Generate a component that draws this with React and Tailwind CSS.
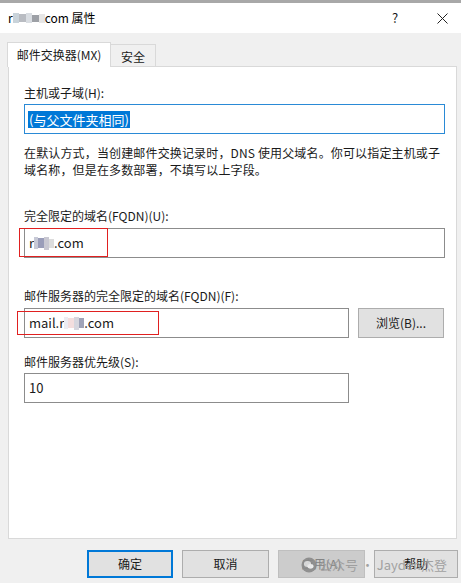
import React from "react";

const font = { fontFamily: '"Microsoft YaHei","Noto Sans CJK SC","Noto Sans",sans-serif' };

function Mosaic({ cells }) {
  return (
    <span className="inline-flex items-center align-middle">
      {cells.map((c, i) => (
        <span key={i} className="inline-block" style={{ width: c[0], height: c[1], background: c[2] }} />
      ))}
    </span>
  );
}

export default function App() {
  return (
    <div className="w-[461px] h-[583px] bg-[#f0f0f0] flex flex-col overflow-hidden relative text-[12px] text-[#1a1a1a]" style={font}>
      <div className="h-[3px] bg-[#a8a8a8] shrink-0" />
      <div className="h-[30px] bg-white flex items-center pl-[8px] shrink-0">
        <span className="flex items-center text-[12px] text-black">
          <span>r</span>
          <Mosaic cells={[[6, 10, "#c9d3da"], [7, 8, "#b9bcc2"], [6, 10, "#d9dde2"], [7, 7, "#9da0a6"], [6, 9, "#e6e6e6"]]} />
          <span>com 属性</span>
        </span>
        <div className="flex-1" />
        <span className="w-[10px] text-center text-[13px] mr-[37px]">?</span>
        <svg width="11" height="11" viewBox="0 0 11 11" className="mr-[13px]">
          <path d="M0.5 0.5 L10.5 10.5 M10.5 0.5 L0.5 10.5" stroke="#222" strokeWidth="1" />
        </svg>
      </div>

      <div className="pt-[9px] pl-[7px] pr-[4px] flex flex-col">
        <div className="flex items-end h-[24px]">
          <div className="h-[25px] w-[104px] bg-white border border-[#d9d9d9] border-b-0 flex items-center justify-center relative z-10 -mb-[1px]">
            <span className="pb-[1px]">邮件交换器(MX)</span>
          </div>
          <div className="h-[22px] w-[45px] bg-[#f0f0f0] border border-[#d9d9d9] border-l-0 border-b-0 flex items-center justify-center">
            <span className="pt-[2px]">安全</span>
          </div>
        </div>

        <div className="h-[473px] bg-white border border-[#d9d9d9] ml-[1px] pl-[15px] pr-[12px] pt-[17px] flex flex-col relative">
          <div className="h-[17px] leading-[17px]">主机或子域(H):</div>
          <div className="mt-[3px] h-[30px] w-[421px] border border-[#2a8ad6] flex items-center pl-[3px]">
            <span className="bg-[#0078d7] text-white text-[13px] leading-[17px] px-[1px]">(与父文件夹相同)</span>
          </div>
          <div className="mt-[10px] leading-[17px] w-[425px] tracking-[0.15px]">
            在默认方式，当创建邮件交换记录时，DNS 使用父域名。你可以指定主机或子域名称，但是在多数部署，不填写以上字段。
          </div>

          <div className="mt-[29px] h-[17px] leading-[17px]">完全限定的域名(FQDN)(U):</div>
          <div className="mt-[4px] h-[30px] w-[421px] border border-[#8c8c8c] flex items-center pl-[4px] text-[13px]">
            <span>r</span>
            <Mosaic cells={[[4, 12, "#c7c9d6"], [6, 10, "#9a9db9"], [5, 13, "#c9c8d2"], [5, 9, "#dcdcdc"]]} />
            <span>.com</span>
          </div>

          <div className="mt-[29px] h-[17px] leading-[17px]">邮件服务器的完全限定的域名(FQDN)(F):</div>
          <div className="mt-[4px] flex items-center">
            <div className="h-[30px] w-[325px] border border-[#8c8c8c] flex items-center pl-[4px] text-[13px]">
              <span>mail.r</span>
              <Mosaic cells={[[4, 12, "#ececf2"], [6, 10, "#f3dede"], [5, 13, "#d6d6de"], [5, 10, "#9fa3b8"]]} />
              <span>.com</span>
            </div>
            <div className="ml-[9px] h-[30px] w-[86px] bg-[#e1e1e1] border border-[#adadad] flex items-center justify-center">
              浏览(B)...
            </div>
          </div>

          <div className="mt-[15px] h-[17px] leading-[17px]">邮件服务器优先级(S):</div>
          <div className="mt-[3px] h-[30px] w-[325px] border border-[#8c8c8c] flex items-center pl-[4px] text-[13px]">
            10
          </div>

          <div className="absolute left-[10px] top-[161px] w-[89px] h-[29px] border border-[#e02020]" />
          <div className="absolute left-[8px] top-[244px] w-[142px] h-[24px] border border-[#e02020]" />
        </div>
      </div>

      <div className="mt-[11px] flex pl-[87px] gap-[9px]">
        <div className="h-[28px] w-[86px] bg-[#e1e1e1] border-2 border-[#0078d7] flex items-center justify-center">确定</div>
        <div className="h-[28px] w-[87px] bg-[#e1e1e1] border border-[#adadad] flex items-center justify-center">取消</div>
        <div className="h-[28px] w-[87px] bg-[#cccccc] border border-[#bfbfbf] flex items-center justify-center text-[#838383]">应用(A)</div>
        <div className="h-[28px] w-[84px] bg-[#e1e1e1] border border-[#adadad] flex items-center justify-center">帮助</div>
      </div>

      <div className="absolute left-[301px] top-[555px] flex items-center text-[13px] text-[#9a9a9a] opacity-90 pointer-events-none">
        <svg width="16" height="16" viewBox="0 0 16 16">
          <circle cx="8" cy="8" r="7.5" fill="#8a8a8a" />
          <ellipse cx="6.5" cy="7" rx="3.6" ry="2.9" fill="#dcdcdc" />
          <ellipse cx="9.5" cy="9.3" rx="3" ry="2.4" fill="#f0f0f0" />
        </svg>
        <span className="ml-[2px]">公众号 · Jayden杰登</span>
      </div>
    </div>
  );
}
